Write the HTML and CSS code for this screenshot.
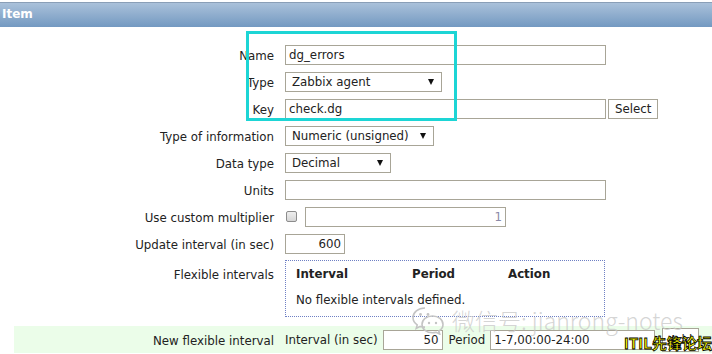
FILE: index.html
```html
<!DOCTYPE html>
<html lang="en">
<head>
    <meta charset="UTF-8">
    <title>Item</title>
    <link rel="stylesheet" href="styles.css">
</head>
<body>
    <div class="header">Item</div>

    <div class="form">
        <div class="row">
            <span class="lbl">Name</span>
            <input class="text wide" type="text" value="dg_errors">
        </div>
        <div class="row">
            <span class="lbl">Type</span>
            <div class="select sel-type"><span>Zabbix agent</span><i class="arrow"></i></div>
        </div>
        <div class="row">
            <span class="lbl">Key</span>
            <input class="text wide" type="text" value="check.dg">
            <button class="btn">Select</button>
        </div>
        <div class="row">
            <span class="lbl">Type of information</span>
            <div class="select sel-info"><span>Numeric (unsigned)</span><i class="arrow"></i></div>
        </div>
        <div class="row">
            <span class="lbl">Data type</span>
            <div class="select sel-data"><span>Decimal</span><i class="arrow"></i></div>
        </div>
        <div class="row">
            <span class="lbl">Units</span>
            <input class="text wide" type="text" value="">
        </div>
        <div class="row">
            <span class="lbl">Use custom multiplier</span>
            <span class="check"></span>
            <input class="text multiplier" type="text" value="1">
        </div>
        <div class="row">
            <span class="lbl">Update interval (in sec)</span>
            <input class="text num" type="text" value="600">
        </div>
        <div class="row row-top">
            <span class="lbl">Flexible intervals</span>
            <div class="flex-box">
                <div class="flex-head">
                    <span class="col-int">Interval</span>
                    <span class="col-per">Period</span>
                    <span>Action</span>
                </div>
                <div class="flex-empty">No flexible intervals defined.</div>
            </div>
        </div>
        <div class="row row-new">
            <span class="lbl">New flexible interval</span>
            <span class="inline-lbl">Interval (in sec)</span>
            <input class="text num" type="text" value="50">
            <span class="inline-lbl">Period</span>
            <input class="text period" type="text" value="1-7,00:00-24:00">
            <button class="btn btn-add">Add</button>
        </div>
    </div>

    <!-- highlight and watermarks on top -->
    <div class="highlight"></div>
    <div class="watermark">
        <svg class="wx" width="36" height="30" viewBox="0 0 36 30">
            <path d="M15 3c-7 0-12 4.3-12 9.6 0 3 1.6 5.6 4.2 7.3l-1 3.6 4-2.1c1.5.4 3.1.7 4.8.7" fill="none" stroke="#c4c4c4" stroke-width="1.6"/>
            <path d="M22.5 11c-6 0-10.5 3.8-10.5 8.4s4.5 8.4 10.5 8.4c1.3 0 2.5-.2 3.7-.5l3.5 1.8-.9-3.1c2.5-1.5 4.2-3.9 4.2-6.6 0-4.6-4.5-8.4-10.5-8.4z" fill="none" stroke="#c4c4c4" stroke-width="1.6"/>
            <circle cx="10.5" cy="9.5" r="1.4" fill="#c4c4c4"/>
            <circle cx="18" cy="9.5" r="1.4" fill="#c4c4c4"/>
            <circle cx="19" cy="18" r="1.2" fill="#c4c4c4"/>
            <circle cx="26" cy="18" r="1.2" fill="#c4c4c4"/>
        </svg>
        <span>微信号: jianrong-notes</span>
    </div>
    <div class="forum">ITIL先锋论坛</div>
</body>
</html>
```

FILE: styles.css
```css
body {
    margin: 0;
    height: 354px;
    overflow: hidden;
    position: relative;
    font-family: "DejaVu Sans", Verdana, sans-serif;
    font-size: 11.8px;
    color: #222;
    background: #fff;
}
.header {
    margin-top: 2px;
    height: 25px;
    box-sizing: border-box;
    border-top: 1px solid #8a9fb7;
    background: linear-gradient(#aac1da, #7399c1);
    color: #fff;
    font-weight: bold;
    font-size: 12px;
    line-height: 22px;
    padding-left: 2px;
}
.form {
    padding: 14px 0 0 14px;
}
.row {
    display: flex;
    align-items: center;
    height: 27px;
}
.lbl {
    width: 260px;
    text-align: right;
    margin-right: 11px;
    padding-top: 2px;
    flex: none;
}
.text {
    box-sizing: border-box;
    height: 20px;
    border: 1px solid #a8a597;
    padding: 1px 3px 0;
    font-family: inherit;
    font-size: 11.8px;
    color: #222;
    background: #fff;
    margin: 0;
}
.wide {
    width: 321px;
}
.num {
    width: 60px;
    text-align: right;
}
.multiplier {
    width: 201px;
    text-align: right;
    color: #8a8aa8;
}
.period {
    width: 165px;
}
.select {
    box-sizing: border-box;
    height: 20px;
    border: 1px solid #a8a597;
    display: flex;
    align-items: center;
    padding: 1px 7px 0 6px;
}
.sel-type { width: 157px; }
.sel-info { width: 149px; }
.sel-data { width: 106px; }
.arrow {
    margin-left: auto;
    width: 0;
    height: 0;
    border-left: 3.5px solid transparent;
    border-right: 3.5px solid transparent;
    border-top: 6px solid #111;
}
.btn {
    box-sizing: border-box;
    height: 20px;
    margin-left: 2px;
    padding: 0 6px;
    border: 1px solid #a8a597;
    background: #fff;
    font-family: inherit;
    font-size: 11.8px;
    color: #222;
}
.check {
    box-sizing: border-box;
    width: 11px;
    height: 11px;
    margin: 0 8px 0 1px;
    border: 1px solid #8c8c8c;
    border-radius: 2px;
    background: linear-gradient(#eee, #d6d6d6);
}
.row-top {
    align-items: flex-start;
    height: auto;
    margin-top: 3px;
}
.row-top .lbl {
    padding-top: 8px;
}
.flex-box {
    box-sizing: border-box;
    width: 320px;
    height: 57px;
    border: 1px dotted #6f80c4;
    padding: 6px 10px;
}
.flex-head {
    display: flex;
    font-weight: bold;
    height: 20px;
}
.col-int { width: 116px; }
.col-per { width: 96px; }
.flex-empty {
    margin-top: 6px;
}
.row-new {
    margin-top: 9px;
    height: 27px;
    background: #ebfde9;
}
.inline-lbl {
    margin-right: 5px;
}
.row-new .num {
    margin-right: 6px;
}
.btn-add {
    margin-left: 7px;
    height: 24px;
}
.highlight {
    position: absolute;
    left: 246px;
    top: 31px;
    width: 211px;
    height: 90px;
    box-sizing: border-box;
    border: 3px solid #1dd5d5;
}
.watermark {
    position: absolute;
    left: 410px;
    top: 303px;
    display: flex;
    align-items: center;
    gap: 6px;
    font-family: "Noto Sans CJK SC", sans-serif;
    font-weight: 300;
    font-size: 23px;
    color: rgba(200, 200, 200, 0.75);
}
.forum {
    position: absolute;
    left: 624px;
    top: 333px;
    font-family: "Noto Sans CJK SC", sans-serif;
    font-weight: bold;
    font-size: 15px;
    line-height: 20px;
    color: #ffff00;
    -webkit-text-stroke: 0.8px #000;
}
```
